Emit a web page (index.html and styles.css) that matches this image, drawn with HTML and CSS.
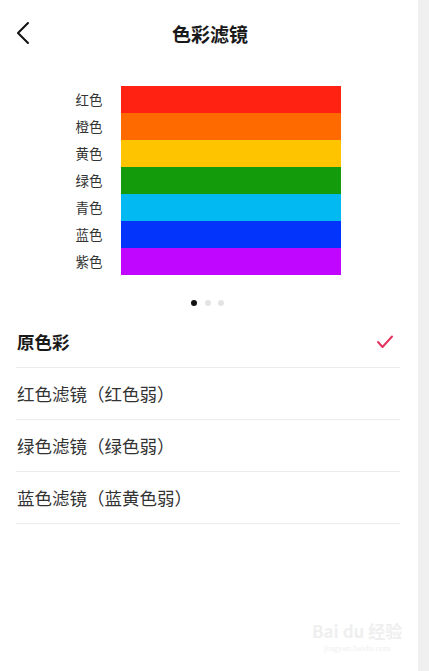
FILE: index.html
```html
<!DOCTYPE html>
<html lang="zh-CN">
<head>
  <meta charset="UTF-8" />
  <meta name="viewport" content="width=device-width, initial-scale=1" />
  <title>色彩滤镜</title>
  <link rel="stylesheet" href="styles.css">
</head>
<body>
  <div class="page">
    <div class="header">
      <svg class="back" width="16" height="24" viewBox="0 0 16 24">
        <polyline points="13,2 3,12 13,22" fill="none" stroke="#111" stroke-width="2" stroke-linecap="round" stroke-linejoin="round" />
      </svg>
      <div class="title">色彩滤镜</div>
    </div>

    <div class="chart">
      <div class="labels">
        <div>红色</div>
        <div>橙色</div>
        <div>黄色</div>
        <div>绿色</div>
        <div>青色</div>
        <div>蓝色</div>
        <div>紫色</div>
      </div>
      <div class="bars">
        <div class="bar red"></div>
        <div class="bar orange"></div>
        <div class="bar yellow"></div>
        <div class="bar green"></div>
        <div class="bar cyan"></div>
        <div class="bar blue"></div>
        <div class="bar purple"></div>
      </div>
    </div>

    <div class="dots">
      <span class="dot active"></span>
      <span class="dot"></span>
      <span class="dot"></span>
    </div>

    <div class="list">
      <div class="item selected">
        <span>原色彩</span>
        <svg width="18" height="16" viewBox="0 0 18 16">
          <polyline points="2,8 6.5,13 16,2.5" fill="none" stroke="#e6335e" stroke-width="2" stroke-linecap="round" stroke-linejoin="round" />
        </svg>
      </div>
      <div class="item">红色滤镜（红色弱）</div>
      <div class="item">绿色滤镜（绿色弱）</div>
      <div class="item">蓝色滤镜（蓝黄色弱）</div>
    </div>

    <div class="watermark">
      <div class="wm-logo">Bai du 经验</div>
      <div class="wm-url">jingyan.baidu.com</div>
    </div>
  </div>
  <div class="side"></div>
</body>
</html>
```

FILE: styles.css
```css
html, body {
  height: 100%;
}
body {
  margin: 0;
  display: flex;
  font-family: "Noto Sans CJK SC", "Noto Sans", sans-serif;
  color: #222;
  background: #fff;
}
.page {
  position: relative;
  width: 418px;
  flex: none;
}
.side {
  flex: 1;
  background: #f0f0f0;
}
.header {
  position: relative;
  height: 66px;
  display: flex;
  align-items: center;
  justify-content: center;
}
.back {
  position: absolute;
  left: 15px;
  top: 21px;
}
.title {
  font-size: 19px;
  font-weight: bold;
  color: #1a1a1a;
  padding-left: 2px;
}
.chart {
  display: flex;
  justify-content: center;
  gap: 18px;
  margin-top: 20px;
  padding-right: 2px;
}
.labels div {
  height: 27px;
  line-height: 27px;
  font-size: 13.5px;
  color: #333;
}
.bars {
  width: 220px;
}
.bar {
  height: 27px;
}
.red { background: #ff2212; }
.orange { background: #ff6a00; }
.yellow { background: #ffc400; }
.green { background: #149b0c; }
.cyan { background: #02b9f2; }
.blue { background: #0234fb; }
.purple { background: #c106ff; }
.dots {
  display: flex;
  justify-content: center;
  gap: 7.5px;
  margin-top: 25px;
  padding-right: 3px;
}
.dot {
  width: 6px;
  height: 6px;
  border-radius: 50%;
  background: #e4e4e4;
}
.dot.active {
  background: #111;
}
.list {
  margin: 10px 18px 0 16px;
}
.item {
  box-sizing: border-box;
  height: 52px;
  display: flex;
  align-items: center;
  justify-content: space-between;
  border-bottom: 1px solid #ececec;
  font-size: 17.5px;
  color: #333;
  padding-left: 1px;
}
.item.selected {
  font-weight: bold;
  color: #1a1a1a;
}
.item svg {
  margin-right: 6px;
}
.watermark {
  position: absolute;
  left: 312px;
  top: 618px;
  color: #efefef;
  text-align: center;
}
.wm-logo {
  font-size: 17px;
  font-weight: bold;
}
.wm-url {
  font-size: 9px;
  font-family: "Liberation Serif", serif;
}
```
